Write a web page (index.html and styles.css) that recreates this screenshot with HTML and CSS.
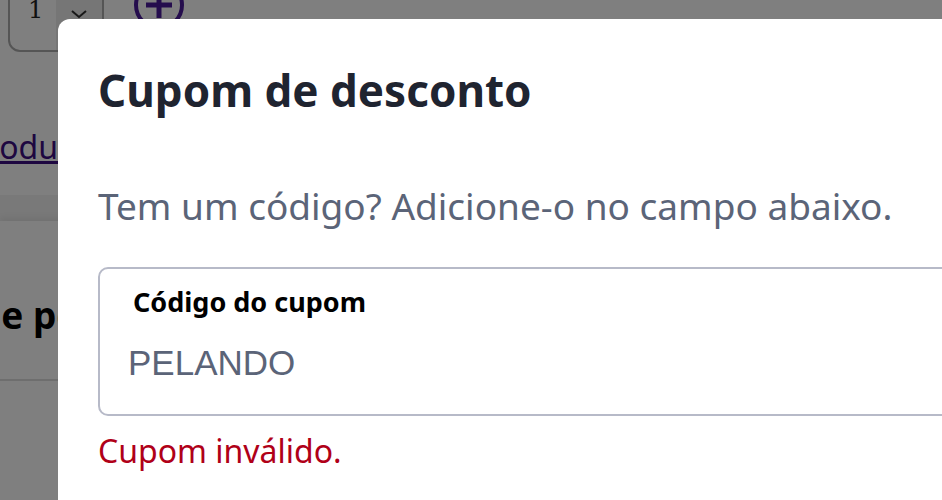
FILE: index.html
```html
<!DOCTYPE html>
<html lang="pt-BR">
<head>
  <meta charset="UTF-8">
  <meta name="viewport" content="width=device-width, initial-scale=1.0">
  <title>Carrinho</title>
  <link rel="stylesheet" href="styles.css">
</head>
<body>
  <div class="page">
    <div class="cart-item">
      <div class="qty">
        <span class="qty-value">1</span>
        <span class="qty-spin">
          <svg width="18" height="26" viewBox="0 0 18 26"><path d="M2 6l7-5 7 5M2 18l7 6 7-6" fill="none" stroke="#333" stroke-width="2"/></svg>
        </span>
      </div>
      <svg class="plus" width="54" height="54" viewBox="0 0 54 54">
        <circle cx="27" cy="27" r="23" fill="none" stroke="#4a1a9a" stroke-width="4"/>
        <path d="M27 14v26M14 27h26" stroke="#4a1a9a" stroke-width="5"/>
      </svg>
    </div>
    <a class="more-link" href="#">produtos</a>
    <div class="band"></div>
    <div class="card">
      <h2 class="card-title">Resumo de pedido</h2>
      <hr class="card-line">
    </div>
  </div>

  <div class="overlay"></div>
  <div class="modal">
    <h1 class="modal-title">Cupom de desconto</h1>
    <p class="modal-text">Tem um código? Adicione-o no campo abaixo.</p>
    <div class="field">
      <label class="field-label" for="coupon">Código do cupom</label>
      <input class="field-input" id="coupon" type="text" value="PELANDO">
    </div>
    <p class="field-error">Cupom inválido.</p>
  </div>
</body>
</html>
```

FILE: styles.css
```css
body {
  margin: 0;
  background: #fff;
  font-family: "Noto Sans", sans-serif;
  overflow: hidden;
}

/* pagina por tras do modal */
.cart-item {
  display: flex;
  align-items: flex-end;
  gap: 28px;
  margin-top: -22px;
  padding-left: 8px;
}
.qty {
  display: flex;
  width: 96px;
  height: 74px;
  border: 2px solid #aaa;
  border-radius: 12px;
  overflow: hidden;
  box-sizing: border-box;
}
.qty-value {
  flex: 1;
  padding: 16px 0 0 18px;
  font-family: "DejaVu Serif", serif;
  font-size: 24px;
  color: #222;
}
.qty-spin {
  display: flex;
  justify-content: center;
  padding-top: 13px;
  width: 46px;
  background: #ececec;
}
.plus {
  margin-bottom: 20px;
}
.more-link {
  display: block;
  margin: 73px 0 0 -33px;
  font-size: 32px;
  line-height: 44px;
  color: #3c0f82;
}
.band {
  height: 26px;
  margin-top: 26px;
  background: #f2f2f2;
}
.card {
  padding-top: 70px;
  box-shadow: 0 -4px 6px rgba(0, 0, 0, 0.06);
}
.card-title {
  margin: 0 0 0 -180px;
  font-size: 37px;
  line-height: 48px;
  font-weight: 700;
  color: #000;
  white-space: nowrap;
}
.card-line {
  margin: 40px 0 0;
  border: 0;
  border-top: 2px solid #ddd;
}

.overlay {
  position: fixed;
  inset: 0;
  background: rgba(0, 0, 0, 0.5);
}

.modal {
  position: fixed;
  top: 19px;
  left: 58px;
  width: 1000px;
  height: 600px;
  padding: 0 40px;
  background: #fff;
  border-radius: 12px;
}
.modal-title {
  margin: 41px 0 0;
  font-size: 44px;
  line-height: 60px;
  font-weight: 700;
  color: #1f2430;
}
.modal-text {
  margin: 61px 0 0;
  font-size: 37px;
  line-height: 50px;
  color: #5b6478;
}
.field {
  display: flex;
  flex-direction: column;
  width: 900px;
  height: 149px;
  margin-top: 36px;
  padding: 14px 0 0 28px;
  border: 2px solid #b7bac8;
  border-radius: 10px;
  box-sizing: border-box;
}
.field-label {
  padding-left: 5px;
  font-size: 27px;
  font-weight: 700;
  color: #000;
}
.field-input {
  margin-top: 23px;
  padding: 0;
  border: 0;
  outline: none;
  font-family: "Liberation Sans", Arial, sans-serif;
  font-size: 35px;
  color: #5b6478;
}
.field-error {
  margin: 13px 0 0;
  font-size: 32px;
  color: #b00018;
}
```
